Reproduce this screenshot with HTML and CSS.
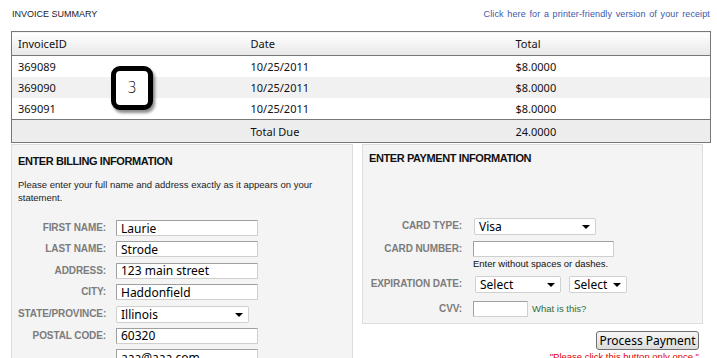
FILE: index.html
```html
<!DOCTYPE html>
<html lang="en">
<head>
    <meta charset="UTF-8">
    <meta name="viewport" content="width=device-width, initial-scale=1.0">
    <title>Invoice Payment</title>
    <link rel="stylesheet" href="styles.css">
</head>
<body>
    <div class="page">
        <div class="topbar">
            <span class="title">INVOICE SUMMARY</span>
            <a class="print-link" href="#print">Click here for a printer-friendly version of your receipt</a>
        </div>

        <div class="invoice-wrap">
            <table class="invoice">
                <colgroup>
                    <col class="col-id">
                    <col class="col-date">
                    <col class="col-total">
                </colgroup>
                <thead>
                    <tr>
                        <th>InvoiceID</th>
                        <th>Date</th>
                        <th>Total</th>
                    </tr>
                </thead>
                <tbody>
                    <tr>
                        <td>369089</td>
                        <td>10/25/2011</td>
                        <td>$8.0000</td>
                    </tr>
                    <tr class="alt">
                        <td>369090</td>
                        <td>10/25/2011</td>
                        <td>$8.0000</td>
                    </tr>
                    <tr>
                        <td>369091</td>
                        <td>10/25/2011</td>
                        <td>$8.0000</td>
                    </tr>
                </tbody>
                <tfoot>
                    <tr>
                        <td></td>
                        <td>Total Due</td>
                        <td>24.0000</td>
                    </tr>
                </tfoot>
            </table>
            <div class="badge">3</div>
        </div>

        <div class="forms">
            <section class="panel billing">
                <h2>ENTER BILLING INFORMATION</h2>
                <p class="intro">Please enter your full name and address exactly as it appears on your statement.</p>

                <div class="form-row">
                    <label for="firstName">FIRST NAME:</label>
                    <input id="firstName" class="text wide" type="text" value="Laurie">
                </div>
                <div class="form-row">
                    <label for="lastName">LAST NAME:</label>
                    <input id="lastName" class="text wide" type="text" value="Strode">
                </div>
                <div class="form-row">
                    <label for="address">ADDRESS:</label>
                    <input id="address" class="text wide" type="text" value="123 main street">
                </div>
                <div class="form-row">
                    <label for="city">CITY:</label>
                    <input id="city" class="text wide" type="text" value="Haddonfield">
                </div>
                <div class="form-row">
                    <label for="state">STATE/PROVINCE:</label>
                    <div class="select state">
                        <select id="state">
                            <option>Illinois</option>
                        </select>
                    </div>
                </div>
                <div class="form-row">
                    <label for="postal">POSTAL CODE:</label>
                    <input id="postal" class="text wide" type="text" value="60320">
                </div>
                <div class="form-row">
                    <span class="label-gap"></span>
                    <input id="email" class="text wide" type="text" value="aaa@aaa.com" aria-label="Email">
                </div>
            </section>

            <div class="payment-col">
                <section class="panel payment">
                    <h2>ENTER PAYMENT INFORMATION</h2>

                    <div class="payment-fields">
                        <div class="form-row">
                            <label for="cardType">CARD TYPE:</label>
                            <div class="select card-type">
                                <select id="cardType">
                                    <option>Visa</option>
                                </select>
                            </div>
                        </div>
                        <div class="form-row">
                            <label for="cardNumber">CARD NUMBER:</label>
                            <div class="field">
                                <input id="cardNumber" class="text card-number" type="text">
                                <span class="hint">Enter without spaces or dashes.</span>
                            </div>
                        </div>
                        <div class="form-row">
                            <label for="expMonth">EXPIRATION DATE:</label>
                            <div class="select exp-month">
                                <select id="expMonth">
                                    <option>Select</option>
                                </select>
                            </div>
                            <div class="select exp-year">
                                <select id="expYear">
                                    <option>Select</option>
                                </select>
                            </div>
                        </div>
                        <div class="form-row cvv-row">
                            <label for="cvv">CVV:</label>
                            <input id="cvv" class="text cvv" type="text">
                            <a class="help-link" href="#cvv">What is this?</a>
                        </div>
                    </div>
                </section>

                <div class="submit">
                    <button type="button">Process Payment</button>
                    <p class="note">"Please click this button only once."</p>
                </div>
            </div>
        </div>
    </div>
</body>
</html>
```

FILE: styles.css
```css
body {
    margin: 0;
    padding: 0;
    background-color: #ffffff;
    font-family: 'Liberation Sans', Arial, sans-serif;
    color: #222222;
}

.page {
    width: 700px;
    padding-left: 11px;
}

/* top line with title and print link */
.topbar {
    display: flex;
    justify-content: space-between;
    align-items: center;
    height: 31px;
    padding-bottom: 4px;
    box-sizing: border-box;
}

.title {
    font-size: 9px;
    color: #1c1a2a;
    padding-left: 1px;
}

.print-link {
    font-size: 9px;
    color: #3a58a8;
    text-decoration: none;
    letter-spacing: 0.12px;
    word-spacing: 1px;
    margin-right: 1px;
}

/* invoice table */
.invoice-wrap {
    position: relative;
}

.invoice {
    width: 700px;
    border-collapse: collapse;
    table-layout: fixed;
    border: 1px solid #777777;
    font-family: 'Noto Sans', sans-serif;
    font-size: 11px;
    color: #111111;
}

.col-id {
    width: 233px;
}

.col-date {
    width: 265px;
}

.invoice th,
.invoice td {
    text-align: left;
    font-weight: normal;
    padding: 0 0 0 6px;
    height: 21px;
}

.invoice th {
    height: 23px;
    background: linear-gradient(#ffffff, #e8e8e8);
    border-bottom: 1px solid #777777;
}

.invoice .alt td {
    background-color: #f1f1f1;
}

.invoice tfoot td {
    height: 22px;
    background-color: #ededed;
    border-top: 1px solid #777777;
}

.badge {
    position: absolute;
    left: 100px;
    top: 35px;
    width: 32px;
    height: 34px;
    border: 5px solid #000000;
    border-radius: 9px;
    background-color: #ffffff;
    box-shadow: 2px 3px 3px rgba(0, 0, 0, 0.45);
    font-family: 'DejaVu Sans', sans-serif;
    font-size: 15px;
    font-weight: 300;
    line-height: 34px;
    text-align: center;
    color: #111111;
}

/* billing / payment panels */
.forms {
    display: flex;
    align-items: flex-start;
    gap: 9px;
    margin-top: 1px;
}

.panel {
    background-color: #f4f4f4;
    border: 1px solid #dddddd;
    box-sizing: border-box;
}

.panel h2 {
    margin: 0;
    font-size: 11px;
    letter-spacing: -0.4px;
    line-height: 13px;
    color: #111111;
}

.billing {
    width: 342px;
    height: 240px;
    padding: 10px 6px 0 6px;
}

.intro {
    margin: 10px 0 16px 0;
    font-size: 9.5px;
    line-height: 13px;
    color: #222222;
}

.payment-col {
    width: 341px;
}

.payment {
    padding: 7px 6px 6px 6px;
}

.payment-fields {
    margin-top: 53px;
}

.form-row {
    display: flex;
    align-items: flex-start;
    margin-bottom: 5.4px;
}

.form-row label,
.label-gap {
    flex: none;
    width: 88px;
    margin-right: 10px;
    text-align: right;
    font-size: 10px;
    font-weight: bold;
    letter-spacing: -0.1px;
    line-height: 16px;
    color: #7c7c7c;
}

.payment .form-row {
    margin-bottom: 6px;
}

.payment .form-row:last-child {
    margin-bottom: 0;
}

.payment .form-row label {
    width: 93px;
    margin-right: 11px;
}

.cvv-row {
    margin-top: 8px;
}

.text {
    height: 16px;
    padding: 0 4px;
    box-sizing: border-box;
    border: 1px solid #b0b0b0;
    border-color: #a0a0a0 #cfcfcf #cfcfcf #a0a0a0;
    border-radius: 1px;
    background-color: #ffffff;
    font-family: 'Noto Sans', sans-serif;
    font-size: 12px;
    color: #000000;
    outline: none;
}

.wide {
    width: 142px;
}

.card-number {
    width: 141px;
}

.cvv {
    width: 55px;
}

.field {
    display: flex;
    flex-direction: column;
}

.hint {
    font-size: 9.5px;
    line-height: 13px;
    color: #111111;
}

.help-link {
    margin-left: 4px;
    font-size: 9.5px;
    line-height: 16px;
    color: #2f6f3c;
    text-decoration: none;
}

/* selects with a small black arrow */
.select {
    position: relative;
    height: 17px;
    box-sizing: border-box;
    border: 1px solid #d0d0d0;
    border-radius: 2px;
    background-color: #ffffff;
}

.select select {
    appearance: none;
    -webkit-appearance: none;
    display: block;
    width: 100%;
    height: 15px;
    border: none;
    background: transparent;
    padding: 0 0 0 4px;
    font-family: 'Noto Sans', sans-serif;
    font-size: 12px;
    line-height: 15px;
    color: #000000;
    outline: none;
}

.select::after {
    content: '';
    position: absolute;
    right: 5px;
    top: 6px;
    border-left: 4px solid transparent;
    border-right: 4px solid transparent;
    border-top: 4px solid #000000;
    pointer-events: none;
}

.state {
    width: 133px;
}

.card-type {
    width: 122px;
    margin-left: 1px;
}

.exp-month {
    width: 86px;
    margin-left: 2px;
}

.exp-year {
    width: 58px;
    margin-left: 8px;
}

/* submit button */
.submit {
    display: flex;
    flex-direction: column;
    align-items: flex-end;
    padding-right: 4px;
    margin-top: 7px;
}

.submit button {
    height: 19px;
    width: 103px;
    padding: 0;
    border: 1px solid #707070;
    border-radius: 3px;
    background: linear-gradient(#f6f6f6, #dcdcdc);
    font-family: 'Noto Sans', sans-serif;
    font-size: 12px;
    line-height: 17px;
    color: #000000;
}

.note {
    margin: 1px 0 0 0;
    font-size: 9.5px;
    color: #e00000;
}
```
